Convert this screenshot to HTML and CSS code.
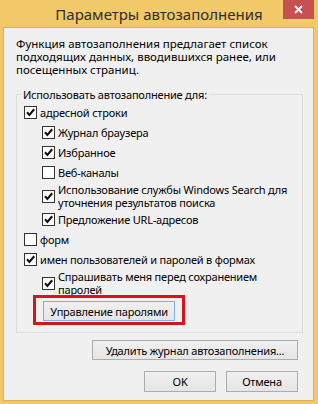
FILE: index.html
```html
<!DOCTYPE html>
<html>
<head>
	<meta charset="UTF-8">
	<title>Параметры автозаполнения</title>
	<link rel="stylesheet" href="styles.css">
</head>
<body>
	<div class="window">
		<div class="titlebar">
			<span class="title">Параметры автозаполнения</span>
			<button class="close" type="button">
				<svg width="9" height="9" viewBox="0 0 9 9"><path d="M1 1 L8 8 M8 1 L1 8" stroke="#fff" stroke-width="1.8" fill="none"/></svg>
			</button>
		</div>
		<div class="content">
			<p class="intro">Функция автозаполнения предлагает список<br>подходящих данных, вводившихся ранее, или<br>посещенных страниц.</p>
			<fieldset class="group">
				<legend>Использовать автозаполнение для:</legend>
				<label class="row"><span class="box on"></span>адресной строки</label>
				<label class="row sub"><span class="box on"></span>Журнал браузера</label>
				<label class="row sub"><span class="box on"></span>Избранное</label>
				<label class="row sub"><span class="box"></span>Веб-каналы</label>
				<label class="row sub multi"><span class="box on"></span><span class="txt">Использование службы Windows Search для<br>уточнения результатов поиска</span></label>
				<label class="row sub"><span class="box on"></span>Предложение URL-адресов</label>
				<label class="row"><span class="box"></span>форм</label>
				<label class="row"><span class="box on"></span>имен пользователей и паролей в формах</label>
				<label class="row sub multi"><span class="box on"></span><span class="txt">Спрашивать меня перед сохранением<br>паролей</span></label>
				<div class="manage">
					<button class="btn btn-default" type="button">Управление паролями</button>
				</div>
			</fieldset>
			<div class="actions first">
				<button class="btn btn-wide" type="button">Удалить журнал автозаполнения...</button>
			</div>
			<div class="actions last">
				<button class="btn" type="button">OK</button>
				<button class="btn" type="button">Отмена</button>
			</div>
		</div>
	</div>
	<script>
		// галочки рисуем одним svg, чтобы не повторять в разметке
		var boxes = document.querySelectorAll(".box.on");
		for (var i = 0; i < boxes.length; i++) {
			boxes[i].innerHTML = '<svg width="11" height="11" viewBox="0 0 11 11"><path d="M2 5.3 L4.4 7.9 L9.2 2.2" stroke="#111" stroke-width="2.1" fill="none"/></svg>';
		}
	</script>
</body>
</html>
```
FILE: styles.css
```css
body {
	margin : 0;
	font-family : "Noto Sans", "Open Sans", sans-serif;
	font-size : 11.5px;
	color : #000;
}

.window {
	width : 318px;
	height : 404px;
	background-color : #f1c968;
	display : flex;
	flex-direction : column;
}

.titlebar {
	height : 27px;
	display : grid;
	grid-template-columns : 1fr auto 1fr;
}
.title {
	grid-column : 2;
	font-size : 15px;
	line-height : 29px;
	color : #2e2e2e;
	white-space : nowrap;
}
.close {
	grid-column : 3;
	justify-self : end;
	align-self : start;
	width : 31px;
	height : 19px;
	margin-right : 4px;
	padding : 0;
	border : none;
	background-color : #c75050;
	display : flex;
	align-items : center;
	justify-content : center;
}

.content {
	flex : 1;
	margin : 0 4px 3px 3px;
	border : 1px solid #d8b25e;
	background-color : #f0f0f0;
	padding : 9px 0 0 12px;
}

.intro {
	margin : 0;
	line-height : 13px;
}

.group {
	margin : 12px 10px 0 0;
	padding : 1px 7px 11px 7px;
	border : 1px solid #dcdcdc;
	min-width : 0;
	font-size : 11px;
	letter-spacing : -0.2px;
}
.group legend {
	padding : 0 2px;
	margin-left : -3px;
	line-height : 13px;
}

.row {
	display : flex;
	align-items : center;
	height : 20px;
	line-height : 13px;
	white-space : nowrap;
}
.row.sub {
	padding-left : 18px;
}
.row.multi {
	height : auto;
	padding-top : 1px;
}

.box {
	width : 11px;
	height : 11px;
	border : 1px solid #333;
	background-color : #fff;
	margin-right : 3px;
	flex : none;
	display : flex;
}

.manage {
	margin-top : 5px;
	padding-left : 19px;
}
.manage .btn {
	position : relative;
}
/* красная рамка-выделение поверх кнопки */
.manage .btn::after {
	content : "";
	position : absolute;
	left : -11px;
	right : -11px;
	top : -7px;
	bottom : -5px;
	border : 3px solid #d7141c;
}

.btn {
	height : 21px;
	width : 72px;
	padding : 0;
	border : 1px solid #acacac;
	background : linear-gradient(#f0f0f0, #e5e5e5);
	font-family : inherit;
	font-size : 11px;
	letter-spacing : -0.2px;
	color : #000;
	white-space : nowrap;
}
.btn-default {
	width : 132px;
	height : 20px;
	border-color : #7eaee6;
}
.btn-wide {
	width : 206px;
	height : 20px;
}

.actions {
	display : flex;
	justify-content : flex-end;
	gap : 10px;
	padding-right : 15px;
}
.actions.first {
	margin-top : 7px;
}
.actions.last {
	margin-top : 11px;
}
```
